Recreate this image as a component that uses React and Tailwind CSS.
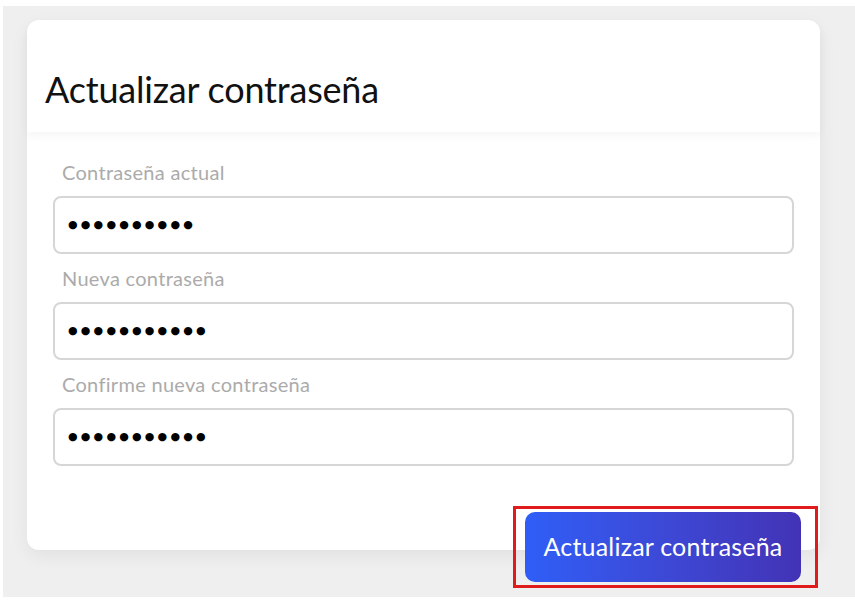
import React from 'react';

const fields = [
    { label: 'Contraseña actual', dots: 10 },
    { label: 'Nueva contraseña', dots: 11 },
    { label: 'Confirme nueva contraseña', dots: 11 },
];

const App = () => {
    return (
        <div className="w-[855px] h-[615px] bg-white font-['Lato',sans-serif] overflow-hidden">
            <div className="ml-[3px] mt-[6px] w-[852px] h-[591px] bg-[#efefef] pt-[14px] pl-[24px]">
                {/* Card */}
                <div className="w-[793px] h-[530px] bg-white rounded-[12px] shadow-[0_6px_18px_rgba(0,0,0,0.06)] flex flex-col">
                    <div className="h-[112px] rounded-t-[12px] shadow-[0_4px_8px_rgba(0,0,0,0.04)] pl-[18px] pt-[48px]">
                        <h1 className="text-[36px] leading-[42px] text-[#111] tracking-[-0.2px]">Actualizar contraseña</h1>
                    </div>

                    <div className="px-[26px] pt-[28px] flex flex-col">
                        {fields.map((f) => (
                            <div key={f.label} className="flex flex-col">
                                <label className="pl-[9px] text-[20px] leading-[24px] tracking-[0.3px] text-[#ababab]">{f.label}</label>
                                <div className="mt-[12px] mb-[12px] h-[58px] w-[741px] rounded-[8px] border-2 border-[#d6d6d6] flex items-center pl-[13px]">
                                    <span className="text-[11px] tracking-[3.2px] text-black font-['DejaVu_Sans',sans-serif]">
                                        {'●'.repeat(f.dots)}
                                    </span>
                                </div>
                            </div>
                        ))}
                    </div>
                </div>

                {/* Button with annotation frame */}
                <div className="flex justify-end pr-[37px] -mt-[44px]">
                    <div className="border-[3px] border-[#e01b1b] pl-[9px] pr-[14px] py-[3px]">
                        <button className="h-[70px] w-[276px] rounded-[10px] bg-gradient-to-r from-[#2e5ef7] to-[#4233b6] text-white text-[25px] tracking-[0.2px]">
                            Actualizar contraseña
                        </button>
                    </div>
                </div>
            </div>
        </div>
    );
};

export default App;
